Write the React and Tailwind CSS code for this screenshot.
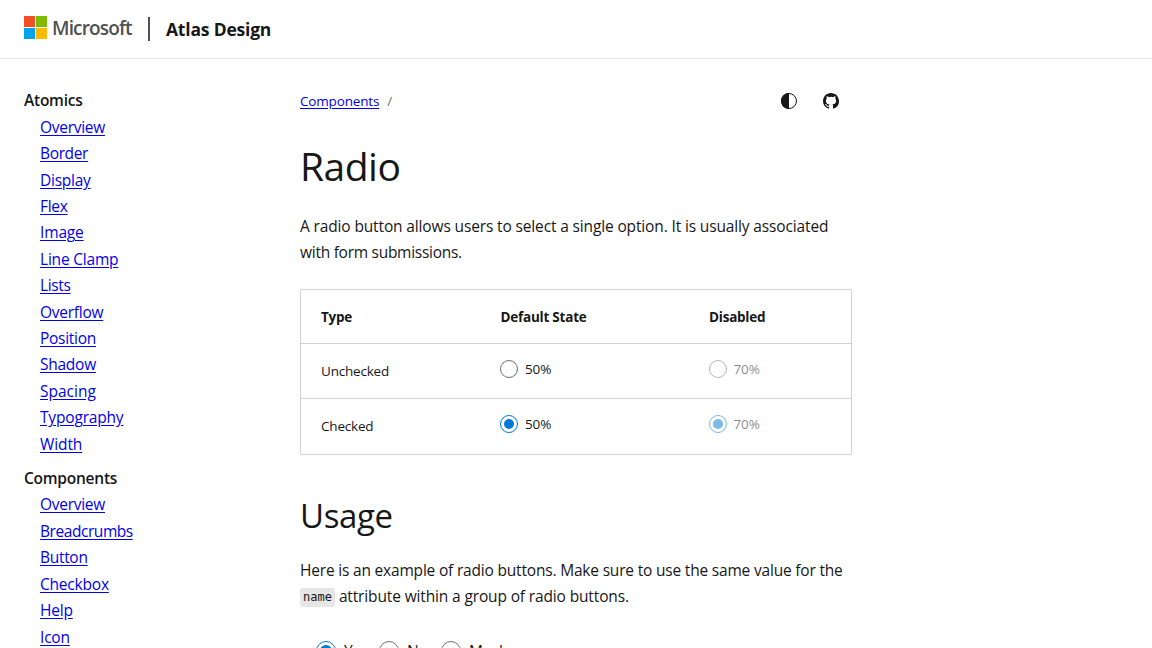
import React from 'react';

const atomics = [
  ['Overview', 'tracking-[-0.28px]'],
  ['Border', 'tracking-[-0.35px]'],
  ['Display', 'tracking-[-0.25px]'],
  ['Flex', 'tracking-[-0.3px]'],
  ['Image', 'tracking-[-0.15px]'],
  ['Line Clamp', 'tracking-[-0.2px]'],
  ['Lists', 'tracking-[-0.35px]'],
  ['Overflow', 'tracking-[-0.26px]'],
  ['Position', 'tracking-[-0.28px]'],
  ['Shadow', 'tracking-[-0.26px]'],
  ['Spacing', 'tracking-[0px]'],
  ['Typography', 'tracking-[-0.18px]'],
  ['Width', 'tracking-[-0.1px]'],
];

const components = [
  ['Overview', 'tracking-[-0.28px]'],
  ['Breadcrumbs', 'tracking-[-0.44px]'],
  ['Button', 'tracking-[-0.3px]'],
  ['Checkbox', 'tracking-[-0.2px]'],
  ['Help', 'tracking-[-0.2px]'],
  ['Icon', 'tracking-[-0.2px]'],
];

function NavSection({ title, items }) {
  return (
    <section className="mb-2">
      <h2 className="font-semibold tracking-[-0.24px]">{title}</h2>
      <ul className="pl-4">
        {items.map(([label, tracking]) => (
          <li key={label}>
            <a href="#" className={`text-[#0000ee] underline underline-offset-2 ${tracking}`}>{label}</a>
          </li>
        ))}
      </ul>
    </section>
  );
}

function Radio({ checked, disabled, large, children }) {
  return (
    <label className={`flex items-center ${large ? 'gap-2' : 'gap-[7px]'} ${disabled ? 'opacity-50' : ''}`}>
      <span
        className={`flex shrink-0 items-center justify-center rounded-full border ${large ? 'size-5' : 'size-[18px]'} ${checked ? 'border-[#0078d4]' : 'border-[#707070]'}`}
      >
        {checked && <span className={`rounded-full bg-[#0078d4] ${large ? 'size-3' : 'size-2.5'}`} />}
      </span>
      <span>{children}</span>
    </label>
  );
}

function Row({ label, checked, className }) {
  return (
    <div className={`grid grid-cols-[179px_208.5px_1fr] border-t border-[#d2d2d2] pl-5 ${className}`}>
      <span className="pt-4 leading-[23px] tracking-[-0.2px]">{label}</span>
      <div className="flex h-[50px] items-center"><Radio checked={checked}>50%</Radio></div>
      <div className="flex h-[50px] items-center"><Radio checked={checked} disabled>70%</Radio></div>
    </div>
  );
}

export default function App() {
  return (
    <div className="h-[648px] overflow-hidden bg-white font-['Open_Sans',sans-serif] text-[15.5px] leading-[26.4px] text-[#171717]">
      <header className="flex h-[59px] items-start border-b border-[#e6e6e6] pl-6">
        <div className="mt-4 grid size-[23px] grid-cols-2 gap-px">
          <span className="bg-[#f25022]" />
          <span className="bg-[#7fba00]" />
          <span className="bg-[#00a4ef]" />
          <span className="bg-[#ffb900]" />
        </div>
        <span className="mt-[14px] ml-[5px] w-[96px] text-[19px] leading-[28px] font-semibold tracking-[-0.84px] text-[#505050]">Microsoft</span>
        <span className="mt-[17px] h-6 w-0.5 bg-[#505050]" />
        <span className="mt-[16px] ml-4 text-[17.5px] font-bold tracking-[-0.2px]">Atlas Design</span>
      </header>
      <div className="flex">
        <nav className="w-[300px] shrink-0 pt-[28.4px] pl-6">
          <NavSection title="Atomics" items={atomics} />
          <NavSection title="Components" items={components} />
        </nav>
        <main className="w-[552px] tracking-[-0.14px]">
          <div className="mt-[30px] flex h-6 items-center text-[13.5px]">
            <a href="#" className="tracking-[-0.17px] text-[#0000ee] underline underline-offset-2">Components</a>
            <span className="ml-2 text-[#707070]">/</span>
            <svg className="mr-[26px] ml-auto size-4" viewBox="0 0 16 16" fill="none">
              <circle cx="8" cy="8" r="7.5" stroke="#171717" />
              <path d="M8 0a8 8 0 0 0 0 16z" fill="#171717" />
            </svg>
            <svg className="mr-[13px] size-4" viewBox="0 0 16 16" fill="#171717">
              <path d="M8 0C3.58 0 0 3.58 0 8c0 3.54 2.29 6.53 5.47 7.59.4.07.55-.17.55-.38 0-.19-.01-.82-.01-1.49-2.01.37-2.53-.49-2.69-.94-.09-.23-.48-.94-.82-1.13-.28-.15-.68-.52-.01-.53.63-.01 1.08.58 1.23.82.72 1.21 1.87.87 2.33.66.07-.52.28-.87.51-1.07-1.78-.2-3.64-.89-3.64-3.95 0-.87.31-1.59.82-2.15-.08-.2-.36-1.02.08-2.12 0 0 .67-.21 2.2.82a7.6 7.6 0 0 1 4 0c1.53-1.04 2.2-.82 2.2-.82.44 1.1.16 1.92.08 2.12.51.56.82 1.27.82 2.15 0 3.07-1.87 3.75-3.65 3.95.29.25.54.73.54 1.48 0 1.07-.01 1.93-.01 2.2 0 .21.15.46.55.38A8.01 8.01 0 0 0 16 8c0-4.42-3.58-8-8-8z" />
            </svg>
          </div>
          <h1 className="mt-[27px] h-[52px] text-[39px] leading-[52px] tracking-[-0.5px]">Radio</h1>
          <p className="mt-[21px]">
            A radio button allows users to select a single option. It is usually associated
            <br />
            <span className="tracking-[-0.27px]">with form submissions.</span>
          </p>
          <div className="mt-[23px] border border-[#d2d2d2] text-[13.5px]">
            <div className="grid h-[53px] grid-cols-[179.5px_208.5px_1fr] items-center pt-px pl-5 font-bold tracking-[-0.23px]">
              <span>Type</span>
              <span>Default State</span>
              <span>Disabled</span>
            </div>
            <Row label="Unchecked" className="h-[55px]" />
            <Row label="Checked" checked className="h-14" />
          </div>
          <h2 className="mt-[39px] h-11 text-[33px] leading-[44px] tracking-[-0.4px]">Usage</h2>
          <p className="mt-[19px] h-[53px]">
            <span className="tracking-[-0.19px]">Here is an example of radio buttons. Make sure to use the same value for the</span>
            <br />
            <code className="inline-block h-[19px] rounded-[3px] bg-[#e6e6e6] px-[3px] align-[1px] font-['DejaVu_Sans_Mono',monospace] text-[12px] leading-[18px] tracking-[0.02px]">name</code>{' '}
            attribute within a group of radio buttons.
          </p>
          <div className="mt-[28px] ml-4 flex gap-[14px]">
            <Radio checked large><span className="inline-block w-[21px]">Yes</span></Radio>
            <Radio large><span className="inline-block w-[20px]">No</span></Radio>
            <Radio large>Maybe</Radio>
          </div>
        </main>
      </div>
    </div>
  );
}
